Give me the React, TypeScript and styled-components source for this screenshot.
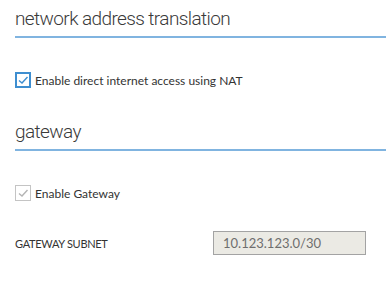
import React from "react";
import styled, { createGlobalStyle } from "styled-components";

const GlobalStyle = createGlobalStyle`
  html, body {
    margin: 0;
    padding: 0;
    background: #ffffff;
  }
  body {
    font-family: Lato, "Open Sans", sans-serif;
    color: #333333;
  }
`;

const Page = styled.div`
  width: 386px;
  height: 283px;
  overflow: hidden;
  padding-left: 15px;
  box-sizing: border-box;
`;

const Section = styled.section<{ $top: number }>`
  padding-top: ${p => p.$top}px;
`;

const Heading = styled.h2`
  margin: 0;
  font-family: Roboto, sans-serif;
  font-weight: 300;
  font-size: 19px;
  letter-spacing: -0.6px;
  line-height: 26px;
  color: #3a3a3a;
  padding-bottom: 4px;
  border-bottom: 2px solid #80b4e0;
`;

const CheckRow = styled.label<{ $top: number }>`
  display: flex;
  align-items: center;
  gap: 4px;
  margin-top: ${p => p.$top}px;
  font-size: 12px;
  color: #333333;
  height: 16px;
`;

const Box = styled.span<{ $disabled?: boolean }>`
  width: 16px;
  height: 16px;
  box-sizing: border-box;
  border: ${p => (p.$disabled ? "1px solid #c4c4c4" : "2px solid #3e8ed0")};
  display: flex;
  align-items: center;
  justify-content: center;
  background: #fff;
`;

const Field = styled.div`
  display: flex;
  align-items: center;
  margin-top: 30px;
`;

const FieldLabel = styled.span`
  width: 198px;
  font-size: 11px;
  letter-spacing: -0.3px;
  color: #333333;
`;

const Input = styled.div`
  width: 153px;
  height: 24px;
  box-sizing: border-box;
  background: #ebeae4;
  border: 1px solid #a3a3a3;
  padding-left: 9px;
  font-size: 13px;
  color: #6e6e6e;
  display: flex;
  align-items: center;
`;

const Check = ({ color }: { color: string }) => (
  <svg width="12" height="12" viewBox="0 0 12 12">
    <path d="M2 6.5 L5 9 L10.5 3" fill="none" stroke={color} strokeWidth="1.4" />
  </svg>
);

export default function App() {
  return (
    <>
      <GlobalStyle />
      <Page>
        <Section $top={6}>
          <Heading>network address translation</Heading>
          <CheckRow $top={34}>
            <Box>
              <Check color="#3e8ed0" />
            </Box>
            Enable direct internet access using NAT
          </CheckRow>
        </Section>
        <Section $top={31}>
          <Heading>gateway</Heading>
          <CheckRow $top={34}>
            <Box $disabled>
              <Check color="#b4b4b4" />
            </Box>
            Enable Gateway
          </CheckRow>
          <Field>
            <FieldLabel>GATEWAY SUBNET</FieldLabel>
            <Input>10.123.123.0/30</Input>
          </Field>
        </Section>
      </Page>
    </>
  );
}
